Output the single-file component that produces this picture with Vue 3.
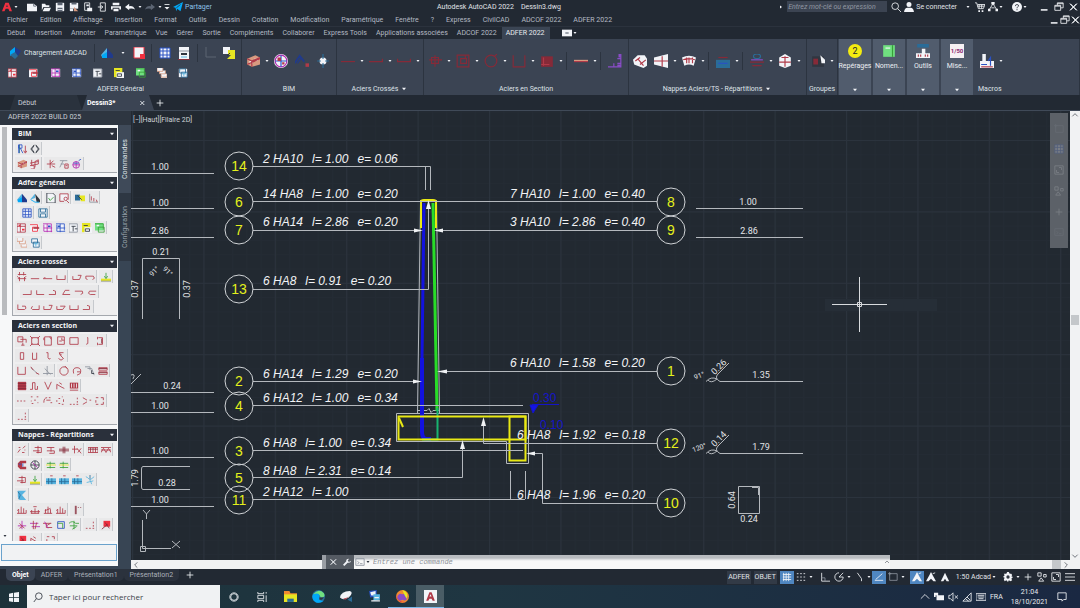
<script setup>
import { h, ref } from 'vue'

// lower case letter: stroke, upper case letter: fill
const colors = {
  r: '#b03a48', n: '#862a38', q: '#f03040', b: '#2a52c4', d: '#203a8c', c: '#58b4e0', a: '#00a8f8',
  g: '#38a038', l: '#70e080', y: '#e6e622', w: '#f2f4f8', k: '#303640', e: '#8b929c',
  m: '#b428b0', v: '#8a4cc8', o: '#f08a30', s: '#d89a80', t: '#2a6c98', u: '#5c6573'
}

const icons = {
  logo: 'Q M0 11L4 1H8L12 11H9L7.600 8H4.400L3 11Z;K M6 3L5 6H7Z',
  down: 'W M3 4H9L6 8Z',
  downDark: 'K M3 4H9L6 8Z',
  right: 'W M4 3V9L8 6Z',
  file: 'W M0 2H8L12 5V11H0Z;u M8 2V5H11',
  open: 'W M1 2H5L6 4H10V6H3L1 10Z;W M4 7H12L10 11H2Z',
  save: 'W M1 1H11V11H1Z;U M3 1H9V4H3ZM3 7H9V11H3Z;w M3 9H9',
  saveAs: 'W M1 1H11V8H1Z;U M3 1H9V3H3Z;S M6 6L11 11H6Z;W M1 8H5V11H1Z',
  page: 'w M2 1H8V10H2Z;W M4 3H7V5H4ZM5 7H11V11H5Z',
  phone: 'w M4 1H10V11H4Z;w M1 6H7M5 4L7 6L5 8',
  print: 'W M2 1H10V4H2ZM0 5H12V9H10V7H2V9H0ZM3 8H9V11H3Z',
  undo: 'W M0 6L5 2V5Q10 4 12 9Q9 7 5 8V10Z',
  redo: 'U M12 6L7 2V5Q2 4 0 9Q3 7 7 8V10Z',
  customize: 'w M3 3H9;W M3 6H9L6 9Z',
  plane: 'A M0 6L12 0L9 11L5 8L4 11L3 7Z;k M4 7L9 3',
  search: 'w M5 1A4 4 0 1 0 5 9A4 4 0 1 0 5 1M8 8L12 12',
  searchDark: 'k M7 1A4 4 0 1 0 7 9A4 4 0 1 0 7 1M4 8L1 12',
  user: 'W M6 0A3 3 0 1 0 6 6A3 3 0 1 0 6 0M0 12Q1 7 4 7H8Q11 7 12 12Z',
  cart: 'w M0 1H2L4 8H10L12 3H3M3 5H11M5 3V8M8 3V8;W M4 10H6V12H4ZM8 10H10V12H8Z',
  app: 'w M1 10L6 2L11 10M4 7H8;W M0 8H3V11H0ZM9 8H12V11H9ZM4 0H8V3H4Z',
  help: 'W M6 0A6 6 0 1 0 6 12A6 6 0 1 0 6 0;k M4 5Q4 3 6 3Q8 3 8 5Q6 6 6 7M6 8V10',
  min: 'w M1 10H9M1 9H9',
  restore: 'w M4 4V1H11V7H8M1 4H8V10H1ZM1 5H8M4 2H11',
  close: 'w M2 2L10 10M10 2L2 10M3 2L11 10M11 2L3 10',
  plus: 'w M6 2V10M2 6H10',
  cube: 'A M1 4L6 0V6L1 9Z;D M6 0L12 4L9 9L6 6Z;T M1 8L6 5L9 9L6 12Z',
  roof: 'C M0 8L6 1V11L1 10Z;D M6 1L12 8V11H6Z;A M1 8L6 5V11H1Z',
  roofK: 'C M0 8L6 1V6Z;K M6 1L12 8V11H8Z;a M1 8L6 11H11',
  redPage: 'W M1 0H11V8L8 11H1Z;q M1 0H11V7M1 0V11H7;Q M7 7H12V12H7Z',
  find: 'W M1 1H11V9H1Z;r M1 1H11V8M1 1V10H6M8 5A2 2 0 1 0 8 9A2 2 0 1 0 8 5M9 9L12 12',
  table: 'W M1 1H11V11H1Z;b M1 1H11V11H1ZM4 1V11M8 1V11M1 4H11M1 8H11',
  disk: 'W M1 0H11V12H1Z;K M3 6H9V8H3Z;e M1 4H11;c M3 10H9',
  diskBlue: 'W M1 1H11V11H1Z;t M1 1H11V11H1ZM3 1V5H9V1M3 11V7H9V11',
  axis: 'u M2 0V10H12',
  axisRed: 'e M2 1V11H12;r M4 4V9M7 6V10M10 8L11 11',
  ortho: 'w M2 1V11H12;e M2 7H6V11',
  copy: 'W M0 0H7V7H0Z;Y M5 3H12V12H4L8 8H5Z;k M7 6L4 9',
  copyPal: 'T M0 2H6V9H0Z;Y M5 3H12V10H7Z;k M3 3L8 8',
  cellR: 'W M0 1H10V11H0Z;r M0 1H10V11H0ZM0 4H10M4 1V11;Q M2 2H4V4H2ZM6 7H9V9H6Z',
  cellQ: 'W M0 1H10V11H0Z;q M0 2H9V10H3V5H10;R M4 5H11V7H4Z',
  cellM: 'W M0 1H11V11H0Z;m M0 1H10V11M1 2V10H11M5 1V11M1 6H11;B M6 3H9V5H6Z',
  cellB: 'W M0 1H11V11H0Z;b M0 1H10V9M1 2V10H11M5 1V11M1 6H11;B M2 3H5V5H2Z',
  cellK: 'W M0 1H11V11H0Z;e M0 1H10V11H0Z;k M3 4H8M5 4V10M7 7H10',
  cellY: 'Y M0 0H10V11H0Z;W M3 5H12V12H3Z;k M2 3H7M4 7H9V10H4Z',
  cellG: 'L M0 0H10V9H0Z;W M2 2H5V4H2Z;g M0 1H10V8M4 5H11V11H4Z',
  stack: 'W M0 0H7V4H0ZM3 3H10V7H3ZM5 7H12V12H5Z;s M0 4H7V0M3 7H10V3M5 11H12V7M0 0V4M3 4V7M5 8V11',
  stackC: 'W M1 1H11V11H1Z;t M2 1H9V6H2ZM4 5H11V11H4Z;c M5 7H10M7 5V10',
  rebarR: 'r M2 1V8L6 10V3L10 1V6M0 5L10 3M0 8L10 6;W M1 8H5V12H1Z;r M1 8H5V12H1',
  bimCage: 'S M1 4L8 1L12 3V9L5 11L1 9Z;W M3 6H6V8H3ZM7 4H10V6H7Z;r M1 4L5 6L12 3M5 11V6M1 9L12 4',
  target: 'W M6 0A6 6 0 1 0 6 12A6 6 0 1 0 6 0;m M6 1A5 5 0 1 0 6 11A5 5 0 1 0 6 1;b M1 6H11M6 1V11;R M3 3H6V6H3ZM7 7H9V9H7Z',
  chev: 'd M0 8L4 2L8 7M0 7L4 1L8 6M2 8L5 4;R M9 8H12V11H9Z',
  node: 'W M6 3A3 3 0 1 0 6 9A3 3 0 1 0 6 3;t M6 0V12M1 6H11;W M6 4A2 2 0 1 0 6 8A2 2 0 1 0 6 4',
  bar: 'N M0 6H12V7H0Z',
  barA: 'N M0 6H12V7H0ZM11 4H12V6H11Z',
  barB: 'N M0 6H12V7H0ZM11 4H12V6H11ZM0 4H1V6H0Z',
  secPlus: 'n M1 5H12M6 1V11M3 3H9V8H3Z',
  secBox: 'n M1 1H11V11H1ZM4 4H9V8H4ZM8 1V4',
  secCirc: 'n M6 1A5 5 0 1 0 6 11A5 5 0 1 0 6 1M9 2L11 0',
  secU: 'n M1 1V11H11V1',
  secFill: 'N M1 2H11V11H1Z;r M3 3V10M1 9H8',
  pinkBar: 'S M0 5H12V6H0Z;R M0 6H12V7H0Z',
  purple: 'v M11 0V11H0M8 8H11M5 8V11M11 4H8;V M9 0H11V3H9ZM8 9H11V11H8Z',
  magnet: 'W M0 5L4 1H10L12 4V10L9 12L6 11L1 9Z;r M2 6L6 3M6 9L11 5M4 4L9 10',
  trap: 'W M0 3L12 0V12L0 9Z;r M0 6H12M7 2V11',
  arch: 'W M0 3Q6 0 12 3L10 10Q6 8 2 10Z;r M1 5Q6 3 11 5M4 3V8M6 3V8M9 3V8',
  bluePad: 'T M0 5H12V12H0Z;n M2 3H10;b M2 8H10',
  redPad: 'n M0 7H12M2 10H10;t M6 0A3 2 0 1 0 6 4A3 2 0 1 0 6 0;v M1 5H11',
  house: 'W M1 3L6 0L11 3V10L6 12L1 10Z;r M1 7H11M6 2V11M3 3H9',
  group: 'K M1 2H11V11H1Z;N M2 4H6V9H2Z;W M8 1L12 5V8H9Z',
  book: 'L M1 1H11V11H1Z;W M3 3H7V4H3Z;g M9 1V11',
  ruler: 'T M1 0H11V3H1Z;W M5 4H8V8H12V12H0V8H5Z;r M2 9V11M4 9V11M8 9V11M10 9V11',
  macro: 'W M2 0H5V6H12V12H0V6H2Z;b M7 6L9 3V10M1 9H6;r M1 11H11',
  mdown: 'b M2 1H6V5H2ZM2 11V1M4 5L7 11;t M3 1V11;r M10 2V10M8 8L10 11L12 8',
  diamond: 'k M5 1L1 6L5 11M7 1L11 6L7 11M5 2L2 6L5 10M7 2L10 6L7 10',
  rCross: 'r M1 6H11M5 1V11M5 6L9 2M7 8L11 10',
  rNote: 'e M1 2H10M2 6H6M1 10L5 2;r M7 6H11V11H7ZM8 8H10',
  globe: 'm M5 3A4 4 0 1 0 5 11A4 4 0 1 0 5 3M1 7H9M5 3V11;b M2 5H8M8 2L11 0',
  check: 'W M1 0H8L11 3V12H1Z;k M1 0H8L11 3V12H1Z;g M3 6L5 9L9 5',
  hash: 'r M1 3H11M1 8H11M3 0V4M8 0V4M3 6V11M9 6V11M0 5L2 7M11 5L9 7',
  s1: 'r M1 8H11', s2: 'r M0 8H11M1 7H3', s3: 'r M1 4V9H11V4', s4: 'r M1 9H9L11 4L7 4M1 9V5',
  s5: 'r M3 9Q0 9 1 5H10Q13 8 9 9', s6: 'r M1 9H11V4', s7: 'r M2 4V9H11', s8: 'r M1 9H9V5L6 4',
  s9: 'r M10 4L5 4L2 9H11', s10: 'r M1 5H10Q12 8 8 9', s11: 'r M11 5H3Q0 8 4 9H10',
  s12: 'r M1 3V9H9Q12 8 10 5H6', s13: 'r M3 5Q0 8 3 9H11V4', s14: 'r M1 5V9H8L11 5H5',
  pour: 'Y M0 8H12V11H0Z;g M6 1V7M4 5L6 8L8 5;e M0 11H12',
  f1: 'r M1 1H7V7H1ZM4 4H11V8M7 8L7 11M5 11H9', f2: 'r M2 2H10V10H2ZM0 0L3 3M12 0L9 3M0 12L3 9M12 12L9 9',
  f3: 'r M2 1H10V11H2ZM10 4L8 1M1 2V5', f4: 'r M2 1H10V10H2ZM7 5H10M7 5V2M4 6H7', f5: 'r M1 2H11V10H1Z',
  f6: 'r M6 2H7V9L5 10', f7: 'r M4 2H9V10H4M3 1V4M3 8V11;n M8 3V9', f8: 'r M4 2H8V10H4Z',
  f9: 'r M3 2V10H8V2', f10: 'r M4 2H6V8Q7 11 9 9', f11: 'r M9 2H4L5 5L9 9L6 11L3 9M4 3L7 5',
  u1: 'r M1 1V10H10V1', u2: 'e M1 2L10 10;r M1 1L4 5M7 8L11 10', u3: 'e M5 0V11M0 9H12M2 3L9 10',
  u4: 'r M6 1A5 5 0 1 0 6 11A5 5 0 1 0 6 1M7 0L10 3', u5: 'r M2 9Q0 2 6 2Q12 2 10 9L6 11M10 7L6 7',
  u6: 'e M0 1H6V5M3 3H8L11 11;k M8 5V9H11', u7: 'r M1 2H11V5H1ZM1 7H11V10H1Z;n M1 3H11M1 8H11',
  v1: 'R M1 1H11V11H1Z;n M1 3H11M1 6H11M1 9H11', v2: 'r M0 10H3V2H6V10H9M9 6V10', v3: 'r M2 1L6 10L10 1',
  v4: 'r M1 10V4L6 7L10 9M4 2L7 4', v5: 'R M1 2H11V9H1Z;w M3 3V8M6 3V8M9 3V8;r M1 11H11',
  d1: 'r M0 6H2M4 6H6M8 6H10', d2: 'r M1 1H3M8 1H10M5 5H7M2 9H4M9 8H10M1 6H2', d3: 'r M1 8Q1 2 5 2M7 2H9M4 5L9 5M9 8H11',
  d4: 'r M3 3H5M7 1H8M9 4V7M7 10H9M3 9H5M1 5V7', d5: 'r M10 2V4M10 6V8M1 10H3M5 10H7M9 10H11',
  d6: 'r M1 2L6 5M9 5H11M6 7L1 10', d7: 'r M1 2H4M7 2H10V5M1 5V8M1 10H4M7 10H10V7',
  n1: 'r M1 9L4 5M7 4L10 1M2 3H4M6 9H9M9 6H10', n2: 'r M2 3H10V9H4M0 7H8M6 1V10', n3: 'r M1 3H10M1 7H10V10H4M6 3V8',
  n4: 'n M0 5H12M0 7H12M5 2V10M7 2V10', n5: 'r M3 1V10M0 5H7M6 4L11 10M11 4L7 9', n6: 'r M0 3H12V9H0ZM3 3V9M6 3V9M9 3V9;n M0 5H12',
  n7: 'r M0 3H12M0 9L3 4L6 9L9 4L12 9M0 6H12', magR: 'R M11 1H4L1 4V8L4 11H11V8H6V4H11Z;b M7 4V8M2 5H5',
  ring: 'k M6 1A5 5 0 1 0 6 11A5 5 0 1 0 6 1M1 6H11M6 1V11;m M3 3L9 9',
  gr1: 'g M1 4H11M1 9H11M5 2V10;y M0 6H12', strip: 'C M0 4H12V11H0Z;t M0 8H12M3 4V11M7 4V11;r M5 1H8',
  blueY: 'c M1 2Q6 4 8 11M11 2L6 6M2 9L10 7;t M6 0V5', blueC: 'C M1 1H11L6 6L11 12H3L1 8Z;t M1 2L4 6L2 11',
  w1: 'r M0 10H11M2 5V10M5 2V10M8 4V10M11 6V10M0 7L2 5', w2: 'r M1 10H11M2 6V10M6 4V10M10 6V10M4 2H8M0 8H12',
  w3: 'r M1 10H11M3 5V10M6 2V10M9 5V10M2 7L9 4', t1: 'n M4 1V11M5 1V11M7 3H8M10 3H11',
  x1: 'm M1 7H11M6 1V11;r M3 4L9 10M3 10L6 8', x2: 'm M0 4H10M2 8H12;r M4 1V11M8 3L6 11', x3: 'r M0 4H10M4 4V9H11M4 7L9 4;m M2 2L6 10',
  x4: 'b M2 2H10V10H2Z;g M2 4H8V10', x5: 'g M0 4Q4 0 8 4H12M6 1V11M4 11L9 8M1 7H10', x6: 'Q M3 1H11V8H3Z;n M1 11L8 5M5 3L10 10',
  gridOn: 'w M2 1V11M5 1V11M8 1V11M1 3H11M1 6H11M1 9H11', snap: 'w M1 2H3M5 2H7M9 2H11M1 6H3M5 6H7M9 6H11M1 10H3M5 10H7M9 10H11',
  polar: 'w M6 1A5 5 0 1 0 11 6M6 6L11 1M6 6H11', iso: 'w M4 1L9 8M9 8V11', angle: 'w M1 10H11M2 9L10 2', osnap: 'e M2 2H11V10H2ZM0 2H4M2 0V4',
  person: 'W M6 0L8 4L12 11H9L6 8L3 11H0L4 4Z;w M8 2L11 1', ppl: 'W M6 1L8 5L11 11H8L6 8L4 11H1L4 5Z',
  gear: 'W M5 0H7L8 2L10 2L11 4L10 5L12 6L10 8L11 10L9 11L7 10L6 12L4 10L2 11L1 9L2 7L0 6L2 4L1 2L4 2Z;K M6 4A2 2 0 1 0 6 8A2 2 0 1 0 6 4',
  shapes: 'w M1 1H5V5H1ZM8 3H11V6H8ZM5 7L2 11H8Z', full: 'w M1 1H11V11H1ZM6 3H9V6M3 6V9H6', menu: 'w M0 2H12M0 6H12M0 10H12',
  win: 'W M0 2L5 1V6H0ZM6 1L12 0V6H6ZM0 7H5V12L0 11ZM6 7H12V12L6 12Z', cortana: 'w M6 1A5 5 0 1 0 6 11A5 5 0 1 0 6 1M6 2A4 4 0 1 0 6 10A4 4 0 1 0 6 2',
  task: 'w M1 0V2H8V0M1 4H8V8H1ZM1 12V10H8V12M11 0V2M11 4V12', folder: 'O M0 1H5L6 3H12V11H0Z;Y M0 4H12V11H0Z;T M3 8H9V11H3Z',
  edge: 'T M6 0A6 6 0 1 0 6 12A6 6 0 1 0 6 0;L M1 4Q6 -2 11 3Q13 7 8 7Q7 3 1 4Z;A M1 4Q7 2 7 6Q5 10 11 10Q7 13 3 11Q-1 8 1 4Z;K M7 7H11L9 9H7Z',
  saucer: 'W M0 7Q1 1 9 1Q13 2 8 7Q3 10 0 7Z;R M1 7Q4 9 8 6L5 9Z;T M7 9L11 6V11Z', net: 'B M1 1L8 0V6L2 7Z;W M2 2L7 1V5L3 5Z;C M5 4H11V9L5 10Z;w M3 10H11M6 7H10',
  fox: 'O M6 0A6 6 0 1 0 6 12A6 6 0 1 0 6 0;Q M0 4Q2 12 9 11Q1 13 0 4Z;V M6 4A3 3 0 1 0 6 9A3 3 0 1 0 6 4;Y M6 0Q12 2 10 8Q8 6 6 0Z',
  acad: 'W M0 0H12V12H0Z;R M2 10L5 2H7L10 10H8L7 8H5L4 10ZM5 6H7L6 4Z', up: 'w M1 8L6 3L11 8', upDark: 'k M2 8L6 4L10 8', leftDark: 'k M8 2L4 6L8 10', rightDark: 'k M4 2L8 6L4 10', downV: 'k M2 4L6 8L10 4',
  battery: 'W M3 4H12V10H3ZM0 1H5V4H2V6H0Z', mute: 'w M1 4H3L6 1V11L3 8H1ZM8 4L12 8M12 4L8 8', wifi: 'w M1 11L11 1V11ZM4 8L8 11M6 6L10 10', keyboard: 'w M0 2H12V10H0ZM2 4H10M2 6H10M3 8H9',
  note: 'w M1 1H11V9H8L6 11V9H1Z', wrench: 'W M0 10L5 5Q4 1 9 1L7 4L9 6L12 4Q12 8 7 7L2 12Z', prompt: 'e M1 2H11V10H1ZM3 5L5 7L3 8M6 8H9', minirib: 'W M0 2H12V10H0Z;E M4 5H8V7H4Z'
}

// small toolbar glyph on a 12 x 12 grid
const Glyph = (props) =>
  h(
    'svg',
    { viewBox: '0 0 12 12', class: 'glyph', 'aria-hidden': 'true' },
    icons[props.name].split(';').map((shape) => {
      const key = shape[0]
      const color = colors[key.toLowerCase()]
      const filled = key !== key.toLowerCase()
      return h('path', {
        d: shape.slice(2),
        fill: filled ? color : 'none',
        stroke: filled ? 'none' : color
      })
    })
  )

const menus = ['Fichier', 'Edition', 'Affichage', 'Insertion', 'Format', 'Outils', 'Dessin', 'Cotation', 'Modification', 'Paramétrique', 'Fenêtre', '?', 'Express', 'CivilCAD', 'ADCOF 2022', 'ADFER 2022']
const ribbonTabs = ['Début', 'Insertion', 'Annoter', 'Paramétrique', 'Vue', 'Gérer', 'Sortie', 'Compléments', 'Collaborer', 'Express Tools', 'Applications associées', 'ADCOF 2022', 'ADFER 2022']
const activeTab = ref('ADFER 2022')

const quick = ['file', 'open', 'save', 'saveAs', 'page', 'phone', 'print', 'undo']
const generalIcons = ['cellR', 'cellQ', 'cellM', 'cellB', 'cellK', 'cellY', 'cellG', 'stack', 'stackC']

// '+' after the name adds a drop-down arrow, '|' is a separator
const panels = [
  { title: 'BIM', items: ['bimCage+', 'target', 'chev', 'node'] },
  { title: 'Aciers Crossés', more: true, items: ['bar+', 'barA+', 'barB+'] },
  { title: 'Aciers en Section', items: ['secPlus+', 'secBox+', 'secCirc+', 'secU+', 'secFill+', '|', 'pinkBar+', '|', 'purple'] },
  { title: 'Nappes Aciers/TS - Répartitions', more: true, items: ['magnet', 'trap+', 'arch+', '|', 'bluePad+', '|', 'redPad+', 'house+'] },
  { title: 'Groupes', items: ['group+'] }
]
const tiles = [
  { label: 'Repérages', badge: '2', kind: 'round' },
  { label: 'Nomen...', icon: 'book' },
  { label: 'Outils', icon: 'ruler' },
  { label: 'Mise...', badge: '1/50', kind: 'scale' }
]

const sections = ref([
  { title: 'BIM', open: true, rows: [['mdown diamond'], ['bimCage rebarR', 'rCross rNote globe']] },
  {
    title: 'Adfer général',
    open: true,
    rows: [['roof roofK', 'check find', 'copyPal axisRed'], ['', 'table', 'diskBlue'], ['cellR cellQ cellM cellB cellK cellY cellG'], ['stack stackC']]
  },
  {
    title: 'Aciers crossés',
    open: true,
    rows: [['hash s1 s2 s3', 's4 s5', 'pour'], ['', 's6 s7 s8 s9 s10 s11'], ['s12 s13 s4 s14 s3 s8']]
  },
  {
    title: 'Aciers en section',
    open: true,
    rows: [['f1 f2 f3 f4 f5 f6 f7'], ['f8 f9 f10 f11'], ['u1 u2 u3', 'u4 u5 u6 u7'], ['v1 v2 v3 v4 v5'], ['d1 d2 d3 d4 d5 d6 d7'], ['d5']]
  },
  {
    title: 'Nappes - Répartitions',
    open: true,
    rows: [['n1', 'n2 n3 n4 n5', 'n6 n7'], ['magR ring', 'gr1 gr1'], ['n2 pour', 'strip strip strip blueY'], ['blueC'], ['w1 w2 w3 w1', 't1'], ['x1 x2 x3 x4 x5', 'd5', 'x6'], ['x6 v4', 'd7']]
  }
])

const marks = [
  [239, 166, 14], [239, 202, 6], [239, 230, 7], [239, 289, 13], [239, 381, 2], [239, 406, 4], [239, 451, 3],
  [239, 478, 5], [239, 500, 11], [671, 202, 8], [671, 230, 9], [671, 371, 1], [671, 443, 12], [671, 503, 10]
]
const labels = [
  [263, 163, '2 HA10', 'l= 1.00', 'e= 0.06'],
  [263, 198, '14 HA8', 'l= 1.00', 'e= 0.20'],
  [263, 226, '6 HA14', 'l= 2.86', 'e= 0.20'],
  [263, 285, '6 HA8', 'l= 0.91', 'e= 0.20'],
  [263, 378, '6 HA14', 'l= 1.29', 'e= 0.20'],
  [263, 402, '6 HA12', 'l= 1.00', 'e= 0.34'],
  [263, 447, '6 HA8', 'l= 1.00', 'e= 0.34'],
  [263, 475, '8 HA8', 'l= 2.31', 'e= 0.14'],
  [263, 496, '2 HA12', 'l= 1.00', ''],
  [510, 198, '7 HA10', 'l= 1.00', 'e= 0.40'],
  [510, 226, '3 HA10', 'l= 2.86', 'e= 0.40'],
  [510, 367, '6 HA10', 'l= 1.58', 'e= 0.20'],
  [517, 439, '6 HA8', 'l= 1.92', 'e= 0.18'],
  [517, 499, '6 HA8', 'l= 1.96', 'e= 0.20']
]
const leaders = [
  'M253 166.500H430.500V190M425.500 166V190', 'M253 201.500H657', 'M253 230.500H415', 'M657 230.500H441',
  'M253 289.500H428.500V209', 'M253 381.500H414', 'M657 371.500H445', 'M253 405.500H523', 'M253 450.500H523',
  'M253 477.500H462.500V448', 'M253 499.500H525M510.500 471V499M525.500 471V499', 'M657 443.500H483.500V425',
  'M657 503.500H542.500V453.500H534'
]
const arrows = [
  'M423 230.500L414 228.500V232.500Z', 'M434 230.500L443 228.500V232.500Z', 'M428.500 200L426 209H431Z',
  'M422 381.500L413 379.500V383.500Z', 'M437 371.500L447 369.500V373.500Z', 'M462.500 440L460 449H465Z',
  'M483.500 417L481 426H486Z', 'M526 453.500L535 451.500V455.500Z'
]
const dims = [
  [160, 170, '1.00'], [160, 206, '1.00'], [160, 234, '2.86'], [161, 255, '0.21'], [172, 389, '0.24'], [160, 409, '1.00'],
  [160, 454, '1.00'], [167, 486, '0.28'], [160, 503, '1.00'], [748, 205, '1.00'], [749, 234, '2.86'],
  [761, 378, '1.35'], [761, 450, '1.79'], [749, 522, '0.24'],
  [138, 289, '0.37', -90], [190, 289, '0.37', -90], [138, 478, '1.79', -90], [735, 500, '0.64', -90],
  [721, 369, '0.26', -45], [721, 441, '0.14', -45]
]
const angles = [[156, 273, '91°', -45], [166, 273, '91°', 45], [700, 378, '91°', -20], [700, 450, '120°', -20]]

const layouts = ['Objet', 'ADFER', 'Présentation1', 'Présentation2']
const activeLayout = ref('Objet')
const apps = ['cortana', 'task', 'folder', 'edge', 'saucer', 'net', 'fox', 'acad']
const command = ref('')
const search = ref('')
const helpSearch = ref('')
const paletteInput = ref('')

function name(item) {
  return item.replace('+', '')
}
</script>

<template>
  <div class="app">
    <header class="titlebar">
      <div class="quick">
        <button class="logo" aria-label="Application"><Glyph name="logo" /><Glyph name="down" class="caret" /></button>
        <button v-for="q in quick" :key="q" :aria-label="q"><Glyph :name="q" /></button>
        <Glyph name="down" class="caret" />
        <button aria-label="redo"><Glyph name="redo" /></button>
        <Glyph name="down" class="caret" />
        <button class="custom" aria-label="customize"><Glyph name="customize" /></button>
        <a href="#" class="share"><Glyph name="plane" />Partager</a>
      </div>
      <div class="title"><span>Autodesk AutoCAD 2022</span><span>Dessin3.dwg</span></div>
      <div class="account">
        <Glyph name="right" class="caret" />
        <input v-model="helpSearch" type="text" aria-label="Recherche" placeholder="Entrez mot-clé ou expression" />
        <button aria-label="search"><Glyph name="search" /></button>
        <a href="#" class="login"><Glyph name="user" />Se connecter</a>
        <Glyph name="down" class="caret" />
        <button class="cart" aria-label="cart"><Glyph name="cart" /></button>
        <button aria-label="app"><Glyph name="app" /><Glyph name="down" class="caret" /></button>
        <button class="help" aria-label="help"><Glyph name="help" /><Glyph name="down" class="caret" /></button>
        <div class="window-buttons">
          <button v-for="w in ['min', 'restore', 'close']" :key="w" :aria-label="w"><Glyph :name="w" /></button>
        </div>
      </div>
    </header>

    <nav class="menubar">
      <a v-for="m in menus" :key="m" href="#">{{ m }}</a>
      <div class="doc-buttons">
        <button v-for="w in ['min', 'restore', 'close']" :key="w" :aria-label="w"><Glyph :name="w" /></button>
      </div>
    </nav>

    <nav class="ribbon-tabs">
      <button v-for="t in ribbonTabs" :key="t" :class="{ active: t === activeTab }" @click="activeTab = t">{{ t }}</button>
      <span class="mini"><Glyph name="minirib" /><Glyph name="down" class="caret" /></span>
    </nav>

    <section class="ribbon">
      <div class="panel general">
        <div class="panel-rows">
          <div class="row-top">
            <button class="load"><Glyph name="cube" />Chargement ADCAD</button>
            <i class="sep"></i>
            <button aria-label="toit"><Glyph name="roof" /></button>
            <Glyph name="down" class="caret" />
            <button aria-label="page"><Glyph name="redPage" /></button>
            <i class="sep"></i>
            <button aria-label="table"><Glyph name="table" /></button>
            <button class="disk" aria-label="disk"><Glyph name="disk" /></button>
            <i class="sep"></i>
            <button aria-label="axis"><Glyph name="axis" /></button>
            <button aria-label="copy"><Glyph name="copy" /></button>
          </div>
          <div class="row-bottom">
            <button v-for="g in generalIcons" :key="g" :aria-label="g"><Glyph :name="g" /></button>
          </div>
        </div>
        <div class="panel-title">ADFER Général</div>
      </div>
      <div v-for="p in panels" :key="p.title" class="panel">
        <div class="panel-items">
          <template v-for="(item, i) in p.items" :key="i">
            <i v-if="item === '|'" class="sep"></i>
            <button v-else class="tool" :class="{ split: item.endsWith('+') }" :aria-label="name(item)">
              <Glyph :name="name(item)" />
              <Glyph v-if="item.endsWith('+')" name="down" class="caret" />
            </button>
          </template>
        </div>
        <div class="panel-title">{{ p.title }}<Glyph v-if="p.more" name="down" class="caret big" /></div>
      </div>
      <button v-for="t in tiles" :key="t.label" class="tile">
        <span v-if="t.badge" class="badge" :class="t.kind">{{ t.badge }}</span>
        <Glyph v-else :name="t.icon" />
        <span>{{ t.label }}</span>
        <Glyph name="down" class="caret big" />
      </button>
      <div class="panel macros">
        <div class="panel-items">
          <button class="tool split" aria-label="macro"><Glyph name="macro" /><Glyph name="down" class="caret" /></button>
        </div>
        <div class="panel-title">Macros</div>
      </div>
    </section>

    <nav class="file-tabs">
      <button class="file-tab">Début</button>
      <button class="file-tab current">Dessin3*<Glyph name="close" /></button>
      <button class="add" aria-label="Nouveau"><Glyph name="plus" /></button>
    </nav>

    <main class="work">
      <aside class="palette">
        <div class="palette-name">ADFER 2022 BUILD 025</div>
        <div class="palette-body">
          <div class="palette-page">
            <div class="palette-scroll"><i></i><Glyph name="downDark" /></div>
            <div class="sections">
              <section v-for="s in sections" :key="s.title" class="group">
                <button class="group-head" @click="s.open = !s.open">{{ s.title }}<Glyph name="down" /></button>
                <div v-if="s.open" class="group-body">
                  <div v-for="(row, r) in s.rows" :key="r" class="icon-row">
                    <span v-for="(set, k) in row" :key="k" class="icon-set" :class="{ blank: !set }">
                      <button v-for="(ic, j) in set.split(' ').filter(Boolean)" :key="j" :aria-label="ic"><Glyph :name="ic" /></button>
                    </span>
                  </div>
                </div>
              </section>
            </div>
            <input v-model="paletteInput" type="text" aria-label="Saisie" />
          </div>
          <div class="side-tabs">
            <button class="on">Commandes</button>
            <button>Configuration</button>
          </div>
        </div>
      </aside>

      <div class="view">
        <div class="canvas">
          <svg class="drawing" viewBox="131 111 939 449" preserveAspectRatio="xMinYMin slice">
            <defs>
              <pattern id="minor" x="132" y="140" width="14.280" height="14.280" patternUnits="userSpaceOnUse">
                <path d="M0.500 0V15M0 0.500H15" class="minor" />
              </pattern>
              <pattern id="major" x="132" y="140" width="71.400" height="71.400" patternUnits="userSpaceOnUse">
                <path d="M0.500 0V72M0 0.500H72" class="major" />
              </pattern>
            </defs>
            <rect x="131" y="111" width="939" height="449" fill="url(#minor)" />
            <rect x="131" y="111" width="939" height="449" fill="url(#major)" />
            <text x="133" y="122" class="viewname">[−][Haut][Filaire 2D]</text>

            <!-- wall and footing -->
            <path class="concrete" d="M420.500 200L417.500 413M436.500 200L439.500 413M396.500 413.500H528.500V463.500H506.500V441.500H396.500Z" />
            <path class="concrete" d="M417 410.500H427L429 408.500L431 412.500L433 410.500H439" />
            <path class="blue" d="M424 203L422 360" />
            <path class="blue thick" d="M422 358V432Q422 439 427 439H431" />
            <path class="green" d="M433 203L437 411" />
            <path class="green thin" d="M437.500 408V439.500H422" />
            <path class="yellow" d="M421 228V202Q421 200 424 200H433Q436 200 436 202V228" />
            <rect class="yellow" x="398.500" y="416.500" width="127" height="23" />
            <rect class="yellow" x="509.500" y="416.500" width="16" height="44" />
            <path class="yellow" d="M399 418L403 427" />
            <g class="level">
              <text x="533" y="402">0.30</text>
              <text x="540" y="429">0.10</text>
              <path d="M532 404.500H559" />
              <path d="M530 405H538L533 413Z" fill="#1414e6" />
            </g>

            <path v-for="d in leaders" :key="d" :d="d" class="leader" />
            <path v-for="d in arrows" :key="d" :d="d" fill="#f0f2f4" />
            <g v-for="m in marks" :key="m[2]" class="mark">
              <circle :cx="m[0]" :cy="m[1]" r="14" />
              <text :x="m[0]" :y="m[1] + 5">{{ m[2] }}</text>
            </g>
            <text v-for="(l, i) in labels" :key="i" :x="l[0]" :y="l[1]" class="label">
              <tspan>{{ l[2] }}</tspan><tspan dx="9">{{ l[3] }}</tspan><tspan dx="9">{{ l[4] }}</tspan>
            </text>

            <!-- bar shapes -->
            <path class="shape" d="M131 173.500H214M131 208.500H214M131 237.500H214M142.500 319V258.500H179.500V319M131 392.500H214M131 412.500H214M131 457.500H214M131 506.500H214M131 384L141 374M131 375Q136 373 133 379" />
            <path class="shape" d="M190 466.500H143Q141.500 466.500 141.500 469V487Q141.500 489.500 143 489.500H190" />
            <path class="shape" d="M696 208.500H803M696 237.500H803M803 381.500H720Q714 378 718 374L729 363M803 453.500H720Q714 450 718 446L729 435" />
            <path class="shape" d="M706 381.500Q711 376 717 379Q711 384 708 380M706 453.500Q711 448 717 451Q711 456 708 452" />
            <path class="shape" d="M738.500 486.500H759.500V513.500H738.500ZM752 487.500H758.500V495" />
            <text v-for="(t, i) in dims" :key="'d' + i" :x="t[0]" :y="t[1]" :transform="t[3] ? `rotate(${t[3]} ${t[0]} ${t[1]})` : null" class="dim">{{ t[2] }}</text>
            <text v-for="(t, i) in angles" :key="'a' + i" :x="t[0]" :y="t[1]" :transform="`rotate(${t[3]} ${t[0]} ${t[1]})`" class="dim small">{{ t[2] }}</text>

            <path class="shape" d="M142.500 520V548.500H171M140.500 546.500H145.500V551.500H140.500Z" />
            <path class="shape" d="M143 510L146.500 514L150 510M146.500 514V519M172 541L180 548M180 541L172 548" />

            <rect x="825" y="299" width="112" height="12" fill="#262e37" />
            <path class="cursor" d="M859.500 277V332M832 304.500H887M857.500 302.500H861.500V306.500H857.500Z" />
          </svg>
          <div class="navbar">
            <Glyph v-for="n in ['osnap', 'table', 'full', 'shapes', 'plus', 'prompt']" :key="n" :name="n" />
          </div>
          <div class="v-scroll"><Glyph name="upDark" /><i></i><Glyph name="downV" /></div>
        </div>
        <div class="h-scroll"><Glyph name="leftDark" /><i></i><Glyph name="rightDark" /></div>
        <div class="command">
          <span class="grip"></span>
          <button aria-label="close"><Glyph name="close" /></button>
          <button aria-label="wrench"><Glyph name="wrench" /></button>
          <label for="command"><Glyph name="prompt" /><Glyph name="downDark" class="caret" /></label>
          <input id="command" v-model="command" type="text" placeholder="Entrez une commande" />
          <Glyph name="upDark" class="caret" />
        </div>
      </div>
    </main>

    <footer class="status">
      <nav class="layouts">
        <button v-for="l in layouts" :key="l" :class="{ on: l === activeLayout }" @click="activeLayout = l">{{ l }}</button>
        <button class="plus" aria-label="Ajouter"><Glyph name="plus" /></button>
      </nav>
      <div class="toggles">
        <button class="word">ADFER</button>
        <button class="word">OBJET</button>
        <button class="lit" aria-label="grid"><Glyph name="gridOn" /></button>
        <button aria-label="snap"><Glyph name="snap" /></button>
        <Glyph name="down" class="caret" />
        <button class="apart" aria-label="ortho"><Glyph name="ortho" /></button>
        <button aria-label="polar"><Glyph name="polar" /></button>
        <Glyph name="down" class="caret" />
        <button aria-label="iso"><Glyph name="iso" /></button>
        <Glyph name="down" class="caret" />
        <button class="lit" aria-label="angle"><Glyph name="angle" /></button>
        <button aria-label="osnap"><Glyph name="osnap" /></button>
        <Glyph name="down" class="caret" />
        <button class="lit apart" aria-label="person"><Glyph name="person" /></button>
        <button aria-label="person"><Glyph name="person" /></button>
        <button aria-label="scale"><Glyph name="ppl" /></button>
        <button class="scale-text">1:50 Adcad<Glyph name="down" class="caret" /></button>
        <button class="apart" aria-label="gear"><Glyph name="gear" /></button>
        <Glyph name="down" class="caret" />
        <button aria-label="plus"><Glyph name="plus" /></button>
        <button aria-label="shapes"><Glyph name="shapes" /></button>
        <button aria-label="full"><Glyph name="full" /></button>
        <button aria-label="menu"><Glyph name="menu" /></button>
      </div>
    </footer>

    <footer class="taskbar">
      <button class="start" aria-label="start"><Glyph name="win" /></button>
      <label class="search"><Glyph name="searchDark" /><input v-model="search" type="text" aria-label="search" placeholder="Taper ici pour rechercher" /></label>
      <button v-for="a in apps" :key="a" class="app-icon" :class="a" :aria-label="a"><Glyph :name="a" /></button>
      <div class="tray">
        <Glyph v-for="t in ['up', 'battery', 'mute', 'wifi', 'keyboard']" :key="t" :name="t" />
        <span>FRA</span>
        <div class="clock"><span>21:04</span><span>18/10/2021</span></div>
        <Glyph name="note" />
      </div>
    </footer>
  </div>
</template>

<style>
html,
body,
#app {
  height: 100%;
}
body {
  margin: 0;
  background: #222933;
  overflow: hidden;
}
</style>

<style scoped>
.app {
  height: 100%;
  display: flex;
  flex-direction: column;
  background: #222933;
  color: #c8cdd4;
  font-family: Roboto, 'Noto Sans', sans-serif;
  font-size: 7px;
  line-height: 10px;
}
button,
input {
  font: inherit;
  color: inherit;
  border: 0;
  padding: 0;
  margin: 0;
  background: none;
  box-sizing: border-box;
  min-width: 0;
}
input {
  outline: 0;
}
button {
  display: flex;
  align-items: center;
  justify-content: center;
  white-space: nowrap;
}
a {
  color: inherit;
  text-decoration: none;
  white-space: nowrap;
}
.glyph {
  width: 10px;
  height: 10px;
  flex: none;
  display: block;
}
.glyph.caret {
  width: 6px;
  height: 6px;
}
.glyph.big {
  width: 8px;
  height: 8px;
}
.sep {
  width: 1px;
  height: 18px;
  background: #2c3440;
  flex: none;
}

.titlebar {
  height: 13px;
  display: grid;
  grid-template-columns: 437px 1fr auto;
  align-items: center;
}
.quick,
.account,
.share,
.login {
  display: flex;
  align-items: center;
}
.quick {
  padding-left: 2px;
  gap: 4px;
}
.logo {
  gap: 1px;
  margin-right: 4px;
}
.quick > .caret {
  margin: 0 -2px;
}
.custom {
  margin: 0 -3px;
}
.share {
  gap: 2px;
  color: #8cc4ea;
}
.title {
  display: flex;
  gap: 7px;
  color: #e0e3e8;
}
.account {
  padding-right: 2px;
}
.account input {
  width: 100px;
  height: 11px;
  margin: 0 4px 0 3px;
  padding-left: 1px;
  background: #3c4452;
  font-style: italic;
}
.account input::placeholder {
  color: #9298a2;
  opacity: 1;
}
.login {
  gap: 2px;
  margin: 0 8px 0 3px;
  color: #e0e3e8;
}
.cart {
  margin: 0 3px 0 4px;
}
.help {
  margin-left: 8px;
}
.window-buttons {
  display: flex;
  gap: 4px;
  margin-left: 12px;
}

.menubar {
  height: 13px;
  display: flex;
  align-items: center;
  gap: 12px;
  padding-left: 7px;
  color: #b4bac3;
}
.doc-buttons {
  display: flex;
  margin-left: auto;
}

.ribbon-tabs {
  height: 13px;
  display: flex;
  align-items: stretch;
  border-top: 1px solid #2b323d;
  padding-left: 3px;
  box-sizing: border-box;
  color: #b4bac3;
}
.ribbon-tabs button {
  padding: 0 5px 0 4px;
}
.ribbon-tabs button.active {
  background: #3b4554;
  color: #e6e9ee;
}
.mini {
  display: flex;
  align-items: center;
  margin-left: 12px;
}

.ribbon {
  height: 56px;
  display: grid;
  grid-template-columns: 242px 95px 87px 205px 178px 31px 34px 34px 34px 34px 1fr;
  background: #3b4453;
}
.panel {
  display: flex;
  flex-direction: column;
  border-right: 1px solid #2c3440;
}
.panel-title {
  height: 12px;
  display: flex;
  align-items: center;
  justify-content: center;
  gap: 2px;
  white-space: nowrap;
  color: #dfe3e8;
}
.panel-rows {
  flex: 1;
  display: flex;
  flex-direction: column;
  justify-content: space-evenly;
}
.row-top,
.row-bottom {
  display: flex;
  align-items: center;
  justify-content: space-between;
}
.row-top {
  padding: 0 6px 0 9px;
  color: #dfe3e8;
}
.row-top .glyph:not(.caret) {
  width: 12px;
  height: 12px;
}
.load {
  gap: 3px;
}
.disk {
  border-bottom: 1px solid #86303c;
}
.row-bottom {
  padding: 0 53px 0 8px;
}
.panel-items {
  flex: 1;
  display: flex;
  align-items: center;
}
.panel-items .sep {
  margin: 0 3px 0 2px;
}
.tool {
  width: 21px;
}
.tool.split {
  width: 28px;
  gap: 4px;
  padding-left: 3px;
}
.tool .glyph:not(.caret) {
  width: 14px;
  height: 14px;
}
.tile {
  flex-direction: column;
  justify-content: flex-start;
  gap: 3px;
  padding: 5px 0 1px;
  margin: 0 1px;
  background: #515c6d;
  color: #eceff3;
}
.tile > .glyph:first-child {
  width: 14px;
  height: 14px;
}
.tile .caret {
  margin-top: auto;
}
.badge {
  width: 14px;
  height: 14px;
  line-height: 14px;
}
.round {
  border-radius: 50%;
  background: #f4ec10;
  color: #222933;
  font-size: 9px;
}
.scale {
  background: #f6f1f4;
  color: #8a2870;
  font-size: 6px;
  font-weight: bold;
}
.macros {
  align-items: flex-start;
  padding-left: 2px;
}
.macros .panel-title {
  padding-left: 2px;
}

.file-tabs {
  height: 16px;
  box-sizing: border-box;
  padding-left: 10px;
  border-bottom: 1px solid #404a58;
  display: flex;
}
.file-tab {
  width: 72px;
  justify-content: space-between;
  padding: 0 8px;
  background: #2a323d;
  clip-path: polygon(5px 0, calc(100% - 5px) 0, 100% 100%, 0 100%);
}
.file-tab.current {
  background: #3b4453;
  color: #ffffff;
  font-weight: bold;
  padding: 0 9px 0 5px;
}
.file-tab .glyph {
  width: 6px;
  height: 6px;
}
.add {
  margin-left: 1px;
}

.work {
  flex: 1;
  min-height: 0;
  display: flex;
}
.palette {
  width: 131px;
  display: flex;
  flex-direction: column;
  background: #384554;
}
.palette-name {
  height: 14px;
  line-height: 13px;
  padding-left: 8px;
  background: #2e3641;
  color: #c8cdd4;
}
.palette-body {
  flex: 1;
  min-height: 0;
  display: flex;
}
.palette-page {
  width: 118px;
  margin-bottom: 3px;
  background: #f7f8f9;
  display: grid;
  grid-template-columns: 12px 1fr;
  grid-template-rows: minmax(0, 1fr) 17px;
  row-gap: 3px;
  padding-bottom: 5px;
  box-sizing: border-box;
}
.palette-scroll {
  display: flex;
  flex-direction: column;
  justify-content: space-between;
  padding: 2px;
}
.palette-scroll i {
  width: 5px;
  height: 188px;
  background: #b9bbbe;
}
.palette-scroll .glyph {
  width: 6px;
  height: 6px;
}
.sections {
  display: flex;
  flex-direction: column;
  gap: 4px;
  padding: 3px 1px 0 0;
  overflow: hidden;
}
.group {
  flex: none;
}
.group-head {
  width: 100%;
  height: 12px;
  justify-content: space-between;
  padding: 0 1px 0 6px;
  background: #2a303b;
  color: #f4f5f7;
  font-family: 'Open Sans', sans-serif;
  font-weight: bold;
}
.group-head .glyph {
  width: 8px;
  height: 8px;
}
.group-body {
  padding: 1px 0 1px 2px;
  background: #efeff0;
  border: solid #a4a8ae;
  border-width: 0 0 1px 1px;
}
.icon-row {
  height: 15px;
  display: flex;
  align-items: center;
  gap: 3px;
}
.icon-set {
  display: flex;
  box-shadow: 1px 0 #c6c9cd;
}
.icon-set.blank {
  width: 2px;
  box-shadow: none;
}
.icon-set button {
  width: 13px;
  height: 13px;
  background: #e9e9ea;
}
.palette-page input {
  grid-column: 1 / 3;
  margin: 0 1px;
  border: 1px solid #6aa2cc;
  background: #f1f2f3;
  color: #222933;
}
.side-tabs {
  flex: 1;
}
.side-tabs button {
  width: 12px;
  height: 68px;
  writing-mode: vertical-rl;
  transform: rotate(180deg);
  background: #2e3743;
  color: #9ba3ad;
  margin-left: 1px;
}
.side-tabs .on {
  background: #3f4a59;
  color: #dfe3e8;
}

.view {
  flex: 1;
  min-width: 0;
  display: flex;
  flex-direction: column;
  position: relative;
}
.canvas {
  flex: 1;
  min-height: 0;
  display: flex;
  position: relative;
}
.drawing {
  flex: 1;
  min-width: 0;
  height: 100%;
  display: block;
  background: #222931;
}
.minor {
  stroke: #242b34;
}
.major {
  stroke: #2b333d;
}
.concrete,
.leader,
.shape {
  fill: none;
  stroke: #b4b8bd;
}
.blue {
  fill: none;
  stroke: #1212e0;
  stroke-width: 3;
}
.thick {
  stroke-width: 4;
}
.green {
  fill: none;
  stroke: #28dc28;
  stroke-width: 3;
}
.thin {
  stroke: #18b470;
  stroke-width: 2;
}
.yellow {
  fill: none;
  stroke: #e8e814;
  stroke-width: 2;
}
.level {
  fill: #1414c8;
  stroke: #1414c8;
  font-family: 'Liberation Sans', sans-serif;
  font-size: 12px;
}
.level text {
  stroke: none;
}
.mark circle {
  fill: none;
  stroke: #d0d3d6;
}
.mark text {
  fill: #e4f01c;
  font-family: 'Liberation Sans', sans-serif;
  font-size: 14px;
  text-anchor: middle;
}
.label {
  fill: #f2f3f5;
  font-family: 'Liberation Sans', sans-serif;
  font-size: 12px;
  font-style: italic;
}
.dim {
  fill: #e2e4e7;
  font-size: 9px;
  text-anchor: middle;
}
.small {
  font-size: 7px;
}
.viewname {
  fill: #d0d4d9;
  font-size: 7px;
}
.cursor {
  fill: none;
  stroke: #d8dbde;
}
.navbar {
  position: absolute;
  top: 2px;
  right: 12px;
  width: 18px;
  height: 135px;
  display: flex;
  flex-direction: column;
  align-items: center;
  justify-content: space-evenly;
  background: #5c6168;
}
.navbar .glyph {
  opacity: 0.2;
}
.v-scroll {
  width: 10px;
  display: flex;
  flex-direction: column;
  align-items: center;
  justify-content: space-between;
  background: #f1f2f3;
}
.v-scroll i {
  width: 8px;
  height: 10px;
  margin-bottom: 32px;
  background: #c4c7ca;
}
.v-scroll .glyph,
.h-scroll .glyph {
  width: 8px;
  height: 8px;
}
.h-scroll {
  height: 9px;
  display: flex;
  align-items: center;
  background: #f1f2f3;
  padding: 0 10px 0 1px;
}
.h-scroll i {
  width: 9px;
  height: 9px;
  margin: 0 1px 0 auto;
  background: #c4c7ca;
}
.command {
  position: absolute;
  left: 191px;
  right: 190px;
  bottom: 0;
  height: 14px;
  display: flex;
  align-items: center;
  background: linear-gradient(#b8bbbf 0 3px, #e8e9eb 5px, #f8f8f8 6px);
}
.command .grip {
  width: 4px;
  align-self: stretch;
  background: #9a9ea4;
}
.command button {
  width: 14px;
  align-self: stretch;
  background: #555b63;
}
.command button .glyph {
  width: 8px;
  height: 8px;
}
.command label {
  display: flex;
  align-items: center;
  padding: 0 2px 0 1px;
}
.command input {
  flex: 1;
  height: 14px;
  color: #444a52;
  font-family: 'Liberation Mono', monospace;
  font-style: italic;
}
.command input::placeholder {
  color: #8e9298;
  opacity: 1;
}

.status {
  height: 16px;
  display: flex;
  justify-content: space-between;
}
.layouts {
  display: flex;
  align-items: flex-start;
  padding-left: 6px;
}
.layouts button {
  height: 12px;
  padding: 0 6px;
  background: #2b323d;
  border-radius: 0 0 5px 5px;
  color: #aab0b9;
}
.layouts .on {
  background: #3b4453;
  color: #ffffff;
  font-weight: bold;
}
.layouts .plus {
  background: none;
}
.toggles {
  display: flex;
  align-items: center;
  padding-right: 3px;
  color: #e0e3e8;
}
.toggles button {
  min-width: 14px;
  height: 13px;
}
.toggles .word {
  padding: 0 1px;
  margin-right: 3px;
  background: #323a46;
}
.toggles .lit {
  background: #4f86c0;
}
.toggles .apart {
  margin-left: 4px;
}
.toggles .scale-text {
  padding-left: 4px;
}

.taskbar {
  height: 23px;
  display: flex;
  align-items: stretch;
  background: linear-gradient(90deg, #1d323a, #1f3642 45%, #1a2842);
  color: #e8ebee;
}
.start {
  width: 27px;
}
.search {
  width: 193px;
  box-sizing: border-box;
  padding-left: 6px;
  display: flex;
  align-items: center;
  gap: 6px;
  background: #f0f2f3;
}
.search input {
  flex: 1;
  color: #3c4248;
  font-family: 'Open Sans', sans-serif;
  font-size: 8px;
}
.search input::placeholder {
  color: #3c4248;
  opacity: 1;
}
.app-icon {
  width: 28px;
}
.app-icon .glyph {
  width: 13px;
  height: 13px;
}
.app-icon.cortana .glyph,
.app-icon.task .glyph {
  width: 10px;
  height: 10px;
}
.app-icon.fox {
  border-bottom: 1px solid #7ab8e8;
}
.app-icon.acad {
  background: #4a5d66;
  border-bottom: 1px solid #7ab8e8;
}
.tray {
  margin-left: auto;
  display: flex;
  align-items: center;
  gap: 4px;
  padding-right: 13px;
}
.tray span {
  white-space: nowrap;
}
.clock {
  display: flex;
  flex-direction: column;
  align-items: center;
  margin: 0 5px 0 4px;
}
</style>
